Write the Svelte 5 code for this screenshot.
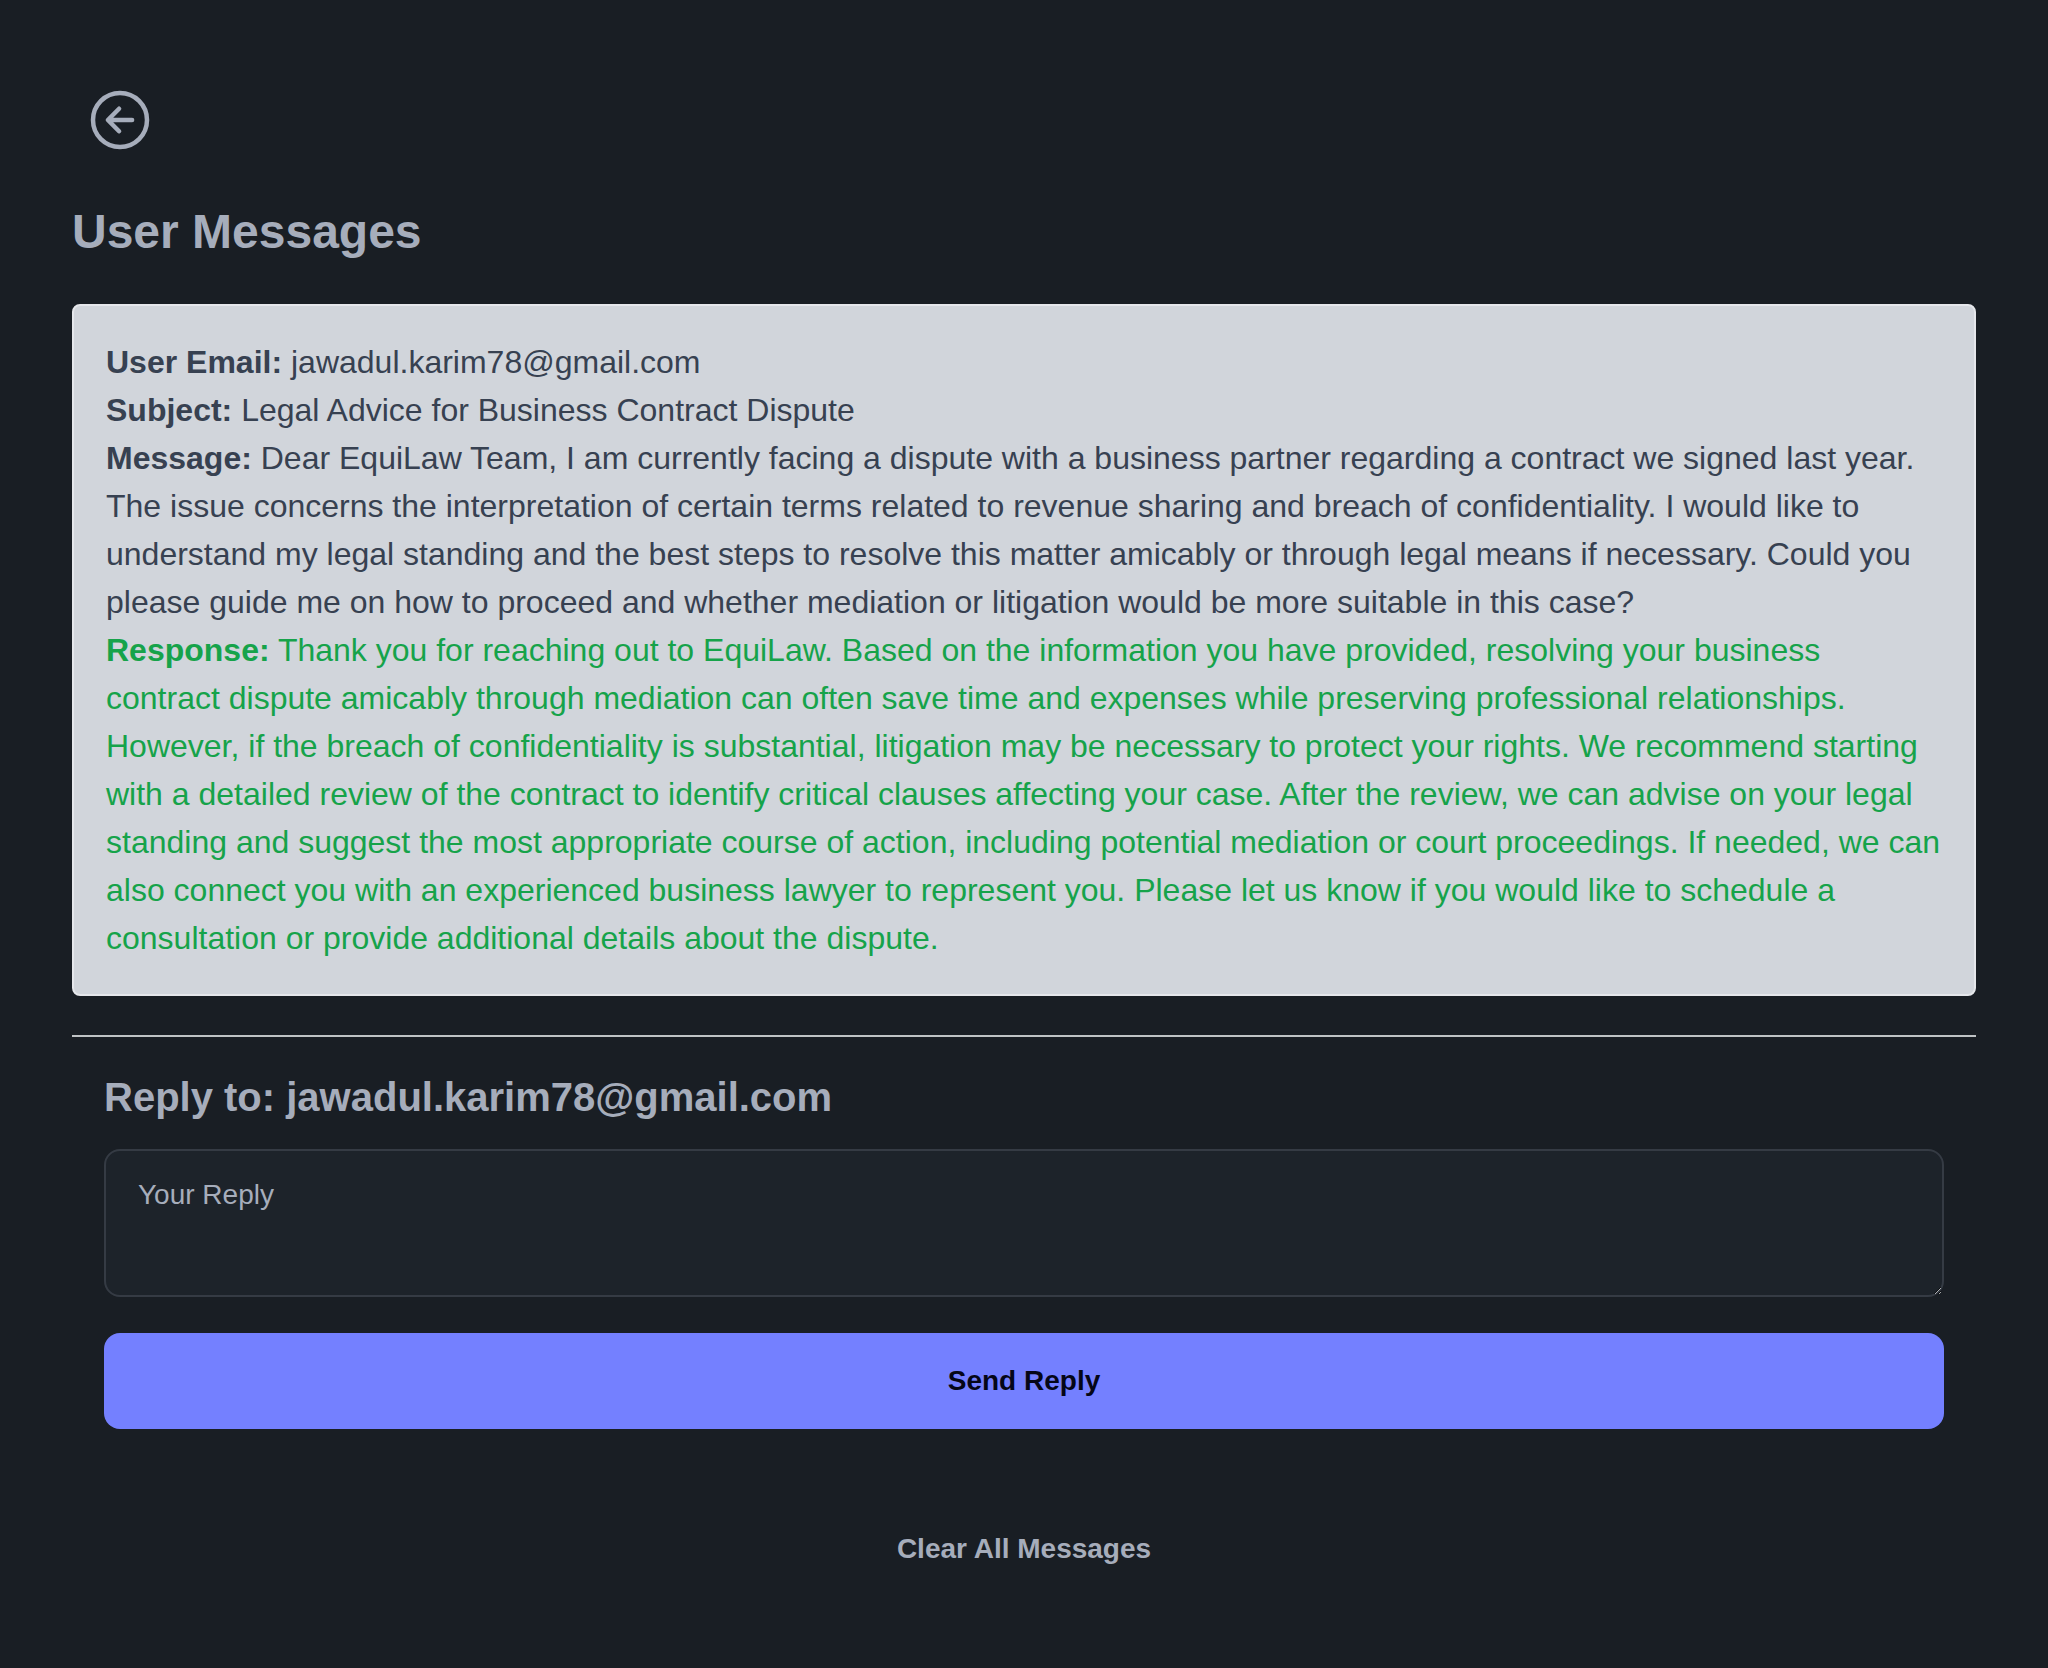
<script>
  const email = 'jawadul.karim78@gmail.com';
  let messages = $state([
    {
      email,
      subject: 'Legal Advice for Business Contract Dispute',
      message:
        'Dear EquiLaw Team, I am currently facing a dispute with a business partner regarding a contract we signed last year. The issue concerns the interpretation of certain terms related to revenue sharing and breach of confidentiality. I would like to understand my legal standing and the best steps to resolve this matter amicably or through legal means if necessary. Could you please guide me on how to proceed and whether mediation or litigation would be more suitable in this case?',
      response:
        'Thank you for reaching out to EquiLaw. Based on the information you have provided, resolving your business contract dispute amicably through mediation can often save time and expenses while preserving professional relationships. However, if the breach of confidentiality is substantial, litigation may be necessary to protect your rights. We recommend starting with a detailed review of the contract to identify critical clauses affecting your case. After the review, we can advise on your legal standing and suggest the most appropriate course of action, including potential mediation or court proceedings. If needed, we can also connect you with an experienced business lawyer to represent you. Please let us know if you would like to schedule a consultation or provide additional details about the dispute.'
    }
  ]);
  let reply = $state('');

  function sendReply(event) {
    event.preventDefault();
    if (reply.trim() && messages.length) {
      messages[0].response = reply;
      reply = '';
    }
  }
</script>

<main class="page">
  <button class="back" type="button" aria-label="Go back" onclick={() => history.back()}>
    <svg viewBox="0 0 512 512" aria-hidden="true">
      <circle cx="256" cy="256" r="192" stroke-miterlimit="10" />
      <path d="M249.38 336 170 256l79.38-80M181.03 256H342" stroke-linecap="round" stroke-linejoin="round" />
    </svg>
  </button>

  <h1>User Messages</h1>

  {#each messages as item}
    <article class="card">
      <p><strong>User Email:</strong> {item.email}</p>
      <p><strong>Subject:</strong> {item.subject}</p>
      <p><strong>Message:</strong> {item.message}</p>
      <p class="response"><strong>Response:</strong> {item.response}</p>
    </article>
  {/each}

  <hr />

  <form class="reply" onsubmit={sendReply}>
    <h2><label for="reply">Reply to: {email}</label></h2>
    <textarea id="reply" placeholder="Your Reply" bind:value={reply}></textarea>
    <button class="send" type="submit">Send Reply</button>
  </form>

  <button class="clear" type="button" onclick={() => (messages = [])}>Clear All Messages</button>
</main>

<style>
  :global(body) {
    background: #191e24;
  }

  .page {
    box-sizing: border-box;
    display: flex;
    flex-direction: column;
    min-height: 100vh;
    padding: 72px;
    color: #a6adbb;
    font-family: Arial, 'Liberation Sans', sans-serif;
    font-size: 32px;
    line-height: 48px;
  }

  h1,
  h2,
  p {
    margin: 0;
  }

  button {
    border: 0;
    background: transparent;
    color: inherit;
    font: 700 28px/32px Arial, 'Liberation Sans', sans-serif;
    cursor: pointer;
  }

  .back {
    display: grid;
    place-items: center;
    width: 96px;
    height: 96px;
    padding: 0;
    border-radius: 50%;
  }

  .back svg {
    width: 72px;
    height: 72px;
    fill: none;
    stroke: currentColor;
    stroke-width: 32;
  }

  h1 {
    margin: 32px 0 40px;
    font-size: 48px;
    line-height: 64px;
  }

  .card {
    padding: 32px;
    border: 2px solid #e5e7eb;
    border-radius: 8px;
    background: #d1d5db;
    color: #374151;
  }

  .card .response {
    color: #16a34a;
  }

  hr {
    width: 100%;
    height: 2px;
    margin: 39px 0 0;
    border: 0;
    background: #bfc3c5;
  }

  .reply {
    display: flex;
    flex-direction: column;
    padding: 32px;
  }

  h2 {
    margin-bottom: 24px;
    font-size: 40px;
    line-height: 56px;
  }

  textarea {
    box-sizing: border-box;
    width: 100%;
    height: 148px;
    padding: 16px 32px;
    border: 2px solid #353b44;
    border-radius: 16px;
    background: #1d232a;
    color: inherit;
    font: 28px/56px Arial, 'Liberation Sans', sans-serif;
    resize: vertical;
  }

  textarea::placeholder {
    color: #a6adbb;
    opacity: 1;
  }

  .send {
    height: 96px;
    margin-top: 36px;
    border-radius: 16px;
    background: #7480ff;
    color: #050617;
  }

  .clear {
    align-self: center;
    height: 96px;
    margin-top: 40px;
    padding: 0 32px;
    border-radius: 16px;
  }
</style>
